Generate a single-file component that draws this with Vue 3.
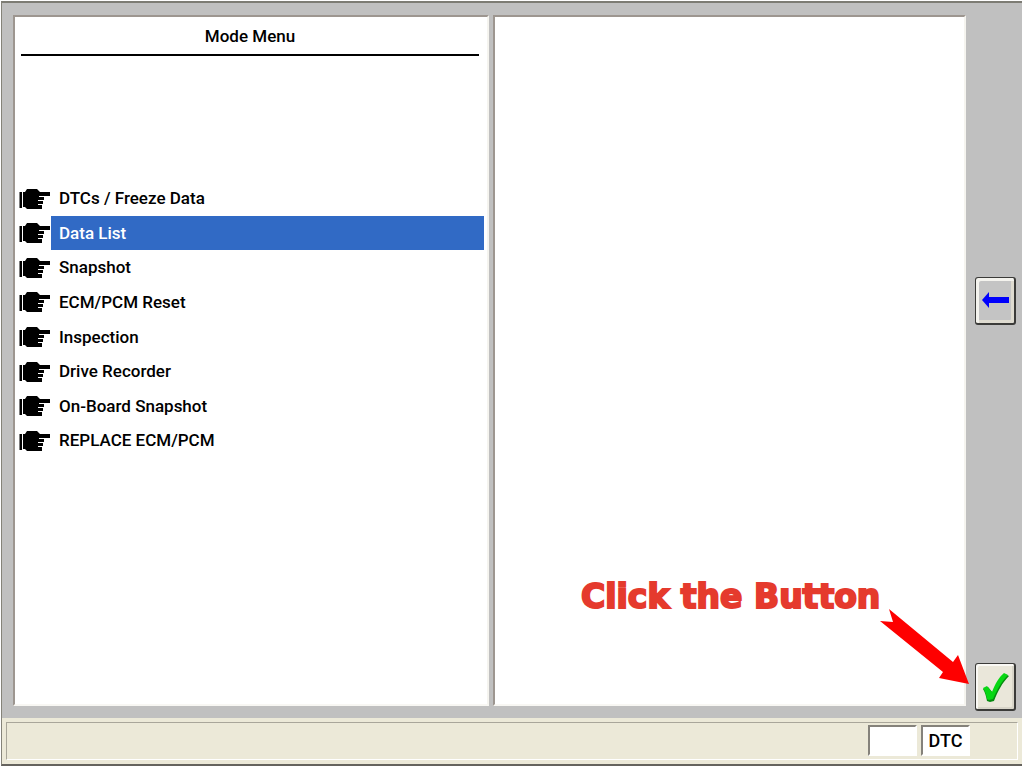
<script setup>
import { ref } from 'vue'

const items = [
  'DTCs / Freeze Data',
  'Data List',
  'Snapshot',
  'ECM/PCM Reset',
  'Inspection',
  'Drive Recorder',
  'On-Board Snapshot',
  'REPLACE ECM/PCM',
]
const selected = ref(1)
</script>

<template>
  <div class="window">
    <main class="workspace">
      <section class="panel menu">
        <h1 class="title">Mode Menu</h1>
        <ul class="list">
          <li v-for="(item, i) in items" :key="item">
            <button
              type="button"
              class="item"
              :class="{ selected: i === selected }"
              @click="selected = i"
            >
              <svg class="hand" viewBox="0 0 32 21" aria-hidden="true">
                <path d="M0.500 4h2.500v16H0.500z" />
                <path d="M4 4h2l2-3h10l3 3h10v4H20v1h5v3h-6v1h5v3h-5v1h4v4H8l-2-2H4z" />
              </svg>
              <span class="label">{{ item }}</span>
            </button>
          </li>
        </ul>
      </section>
      <section class="panel detail"></section>
      <nav class="tools" aria-label="Navigation">
        <button type="button" class="tool back" aria-label="Back">
          <svg width="28" height="18" viewBox="0 0 28 18" aria-hidden="true">
            <path fill="#0000fc" d="M1 8L8 0v5h20v6H8v5z" />
          </svg>
        </button>
        <button type="button" class="tool ok" aria-label="OK">
          <svg width="28" height="30" viewBox="0 0 28 30" aria-hidden="true">
            <path fill="#078b10" d="M2 17l5-2 5 6C15 13 19 6 24 2l4 2C21 11 17 19 13 29l-4 1-3-1C5 24 4 20 2 17z" />
            <path fill="#08d714" d="M2 16l4-2 5 6C14 12 18 5 23 1l4 2C20 10 16 18 12 27l-4 1-2-1C5 22 4 19 2 16z" />
          </svg>
        </button>
      </nav>
      <div class="callout">
        <span class="callout-text">Click the Button</span>
        <svg class="pointer" width="90" height="76" viewBox="0 0 90 76" aria-hidden="true">
          <path fill="#fe0000" d="M1 13L14 14L10 1L74 54L79 47L90 76L60 70L64 64z" />
        </svg>
      </div>
    </main>
    <footer class="status">
      <div class="status-inner">
        <span class="cell"></span>
        <span class="cell">DTC</span>
      </div>
    </footer>
  </div>
</template>

<style>
body {
  background: #fff;
}
</style>

<style scoped>
.window {
  box-sizing: border-box;
  display: flex;
  flex-direction: column;
  min-height: calc(100vh - 3px);
  margin: 1px 2px 2px 1px;
  border-top: 2px solid #7d7c74;
  border-left: 1px solid #858379;
  border-bottom: 2px solid #65635e;
  background: #c0c0c0;
  color: #000;
  font: 500 18px "Roboto", "Liberation Sans", sans-serif;
}

.workspace {
  position: relative;
  flex: 1;
  display: grid;
  grid-template-columns: 476fr 473fr 46px;
  column-gap: 4px;
  padding: 12px 6px 7px 11px;
}

.panel {
  box-sizing: border-box;
  margin-bottom: 5px;
  background: #fff;
  border: 2px solid;
  border-color: #9d9690 #f5f4ef #f8f7f3 #9d9690;
}

.title {
  margin: 0 8px 0 6px;
  padding: 8px 0 6px;
  border-bottom: 2px solid #000;
  font-size: 17px;
  line-height: 23px;
  font-weight: 500;
  text-align: center;
}

.list {
  list-style: none;
  margin: 125px 3px 0 4px;
  padding: 0;
  display: grid;
  grid-template-rows: repeat(8, 1fr);
  height: 277px;
}

.item {
  display: flex;
  align-items: center;
  width: 100%;
  height: 34px;
  padding: 0;
  border: 0;
  background: none;
  color: inherit;
  font-family: inherit;
  font-size: 17px;
  font-weight: 500;
  text-align: left;
}

.hand {
  flex: none;
  width: 32px;
  height: 21px;
}

.label {
  flex: 1;
  padding-left: 8px;
  line-height: 34px;
}

.selected .label {
  background: #316ac5;
  color: #fff;
}

.tools {
  margin-left: 5px;
  display: flex;
  flex-direction: column;
  justify-content: flex-end;
  gap: 338px;
}

.tool {
  box-sizing: border-box;
  display: grid;
  place-items: center;
  width: 41px;
  height: 48px;
  padding: 0;
  border: 1px solid #3b3b39;
  border-right-width: 2px;
  border-bottom-width: 2px;
  border-radius: 3px;
  background: #eae7da;
  box-shadow: inset 2px 2px 0 #faf9f5, inset -2px -2px 0 #d8d5c9;
}

.back {
  background: #c4c4c4;
  box-shadow: inset 3px 3px 0 #f4f3ee, inset -3px -3px 0 #dedbd0;
}

.callout {
  position: absolute;
  right: 53px;
  bottom: 34px;
  width: 388px;
  height: 107px;
}

.callout-text {
  position: absolute;
  left: 0;
  top: 0;
  white-space: nowrap;
  font: 900 33px/40px "Arial Black", "DejaVu Sans", sans-serif;
  color: #e53a2d;
  -webkit-text-stroke: 2px #e53a2d;
}

.pointer {
  position: absolute;
  right: 0;
  bottom: 0;
}

.status {
  padding: 4px;
  background: #ece9d8;
}

.status-inner {
  box-sizing: border-box;
  display: flex;
  justify-content: flex-end;
  gap: 4px;
  height: 38px;
  padding: 2px 47px 3px 0;
  border: 1px solid;
  border-color: #a9a69a #fff #fff #a9a69a;
}

.cell {
  box-sizing: border-box;
  width: 49px;
  border: 2px solid;
  border-color: #85827b #fff #fff #85827b;
  background: #fff;
  line-height: 28px;
  text-align: center;
}
</style>
